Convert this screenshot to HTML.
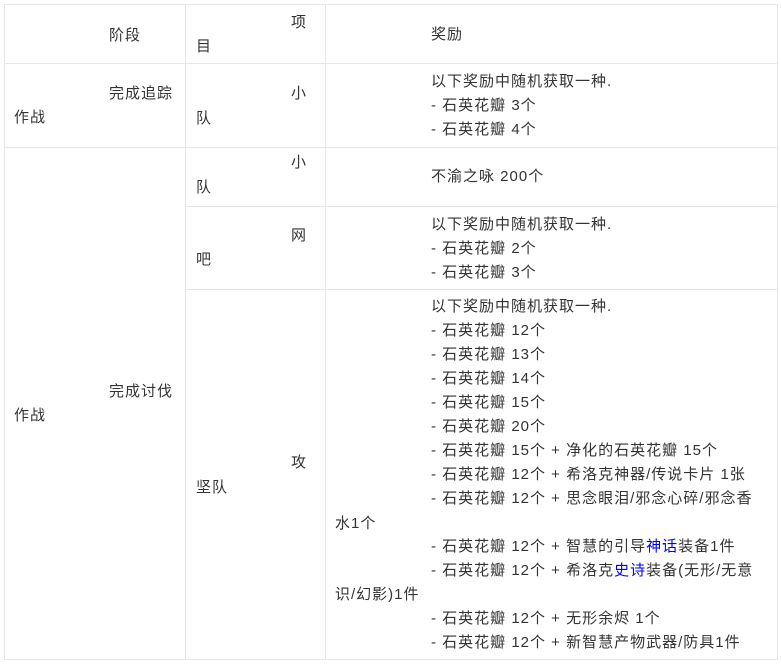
<!DOCTYPE html>
<html><head><meta charset="utf-8"><style>
body{margin:0;width:781px;height:668px;background:#fff;position:relative;overflow:hidden;font-family:"Liberation Sans","Noto Sans CJK SC",sans-serif;font-size:15px;letter-spacing:1px;color:#333}
.t{position:absolute;line-height:24px;white-space:nowrap;margin-top:1px}
.h{position:absolute;height:1px;background:#e6e6e6}
.v{position:absolute;width:1px;background:#e6e6e6}
.b{color:#00f}
</style></head><body>
<div class="h" style="left:4px;width:774px;top:4px"></div>
<div class="h" style="left:4px;width:774px;top:63px"></div>
<div class="h" style="left:4px;width:774px;top:147px"></div>
<div class="h" style="left:185px;width:593px;top:206px"></div>
<div class="h" style="left:185px;width:593px;top:289px"></div>
<div class="h" style="left:4px;width:774px;top:659px"></div>
<div class="v" style="left:4px;top:4px;height:656px"></div>
<div class="v" style="left:185px;top:4px;height:656px"></div>
<div class="v" style="left:325px;top:4px;height:656px"></div>
<div class="v" style="left:777px;top:4px;height:656px"></div>

<div class="t" style="left:109px;top:23px">阶段</div>
<div class="t" style="left:291px;top:10px">项</div>
<div class="t" style="left:196px;top:34px">目</div>
<div class="t" style="left:431px;top:22px">奖励</div>

<div class="t" style="left:109px;top:81px">完成追踪</div>
<div class="t" style="left:14px;top:105px">作战</div>
<div class="t" style="left:291px;top:81px">小</div>
<div class="t" style="left:196px;top:106px">队</div>
<div class="t" style="left:431px;top:69px">以下奖励中随机获取一种.<br>- 石英花瓣 3个<br>- 石英花瓣 4个</div>

<div class="t" style="left:109px;top:379px">完成讨伐</div>
<div class="t" style="left:14px;top:403px">作战</div>
<div class="t" style="left:291px;top:150px">小</div>
<div class="t" style="left:196px;top:175px">队</div>
<div class="t" style="left:431px;top:164px">不渝之咏 200个</div>

<div class="t" style="left:291px;top:223px">网</div>
<div class="t" style="left:196px;top:247px">吧</div>
<div class="t" style="left:431px;top:212px">以下奖励中随机获取一种.<br>- 石英花瓣 2个<br>- 石英花瓣 3个</div>

<div class="t" style="left:291px;top:450px">攻</div>
<div class="t" style="left:196px;top:475px">坚队</div>
<div class="t" style="left:431px;top:294px">以下奖励中随机获取一种.<br>- 石英花瓣 12个<br>- 石英花瓣 13个<br>- 石英花瓣 14个<br>- 石英花瓣 15个<br>- 石英花瓣 20个<br>- 石英花瓣 15个 + 净化的石英花瓣 15个<br>- 石英花瓣 12个 + 希洛克神器/传说卡片 1张<br>- 石英花瓣 12个 + 思念眼泪/邪念心碎/邪念香</div>
<div class="t" style="left:335px;top:511px">水1个</div>
<div class="t" style="left:431px;top:534px">- 石英花瓣 12个 + 智慧的引导<span class="b">神话</span>装备1件<br>- 石英花瓣 12个 + 希洛克<span class="b">史诗</span>装备(无形/无意</div>
<div class="t" style="left:335px;top:582px">识/幻影)1件</div>
<div class="t" style="left:431px;top:606px">- 石英花瓣 12个 + 无形余烬 1个<br>- 石英花瓣 12个 + 新智慧产物武器/防具1件</div>
</body></html>
